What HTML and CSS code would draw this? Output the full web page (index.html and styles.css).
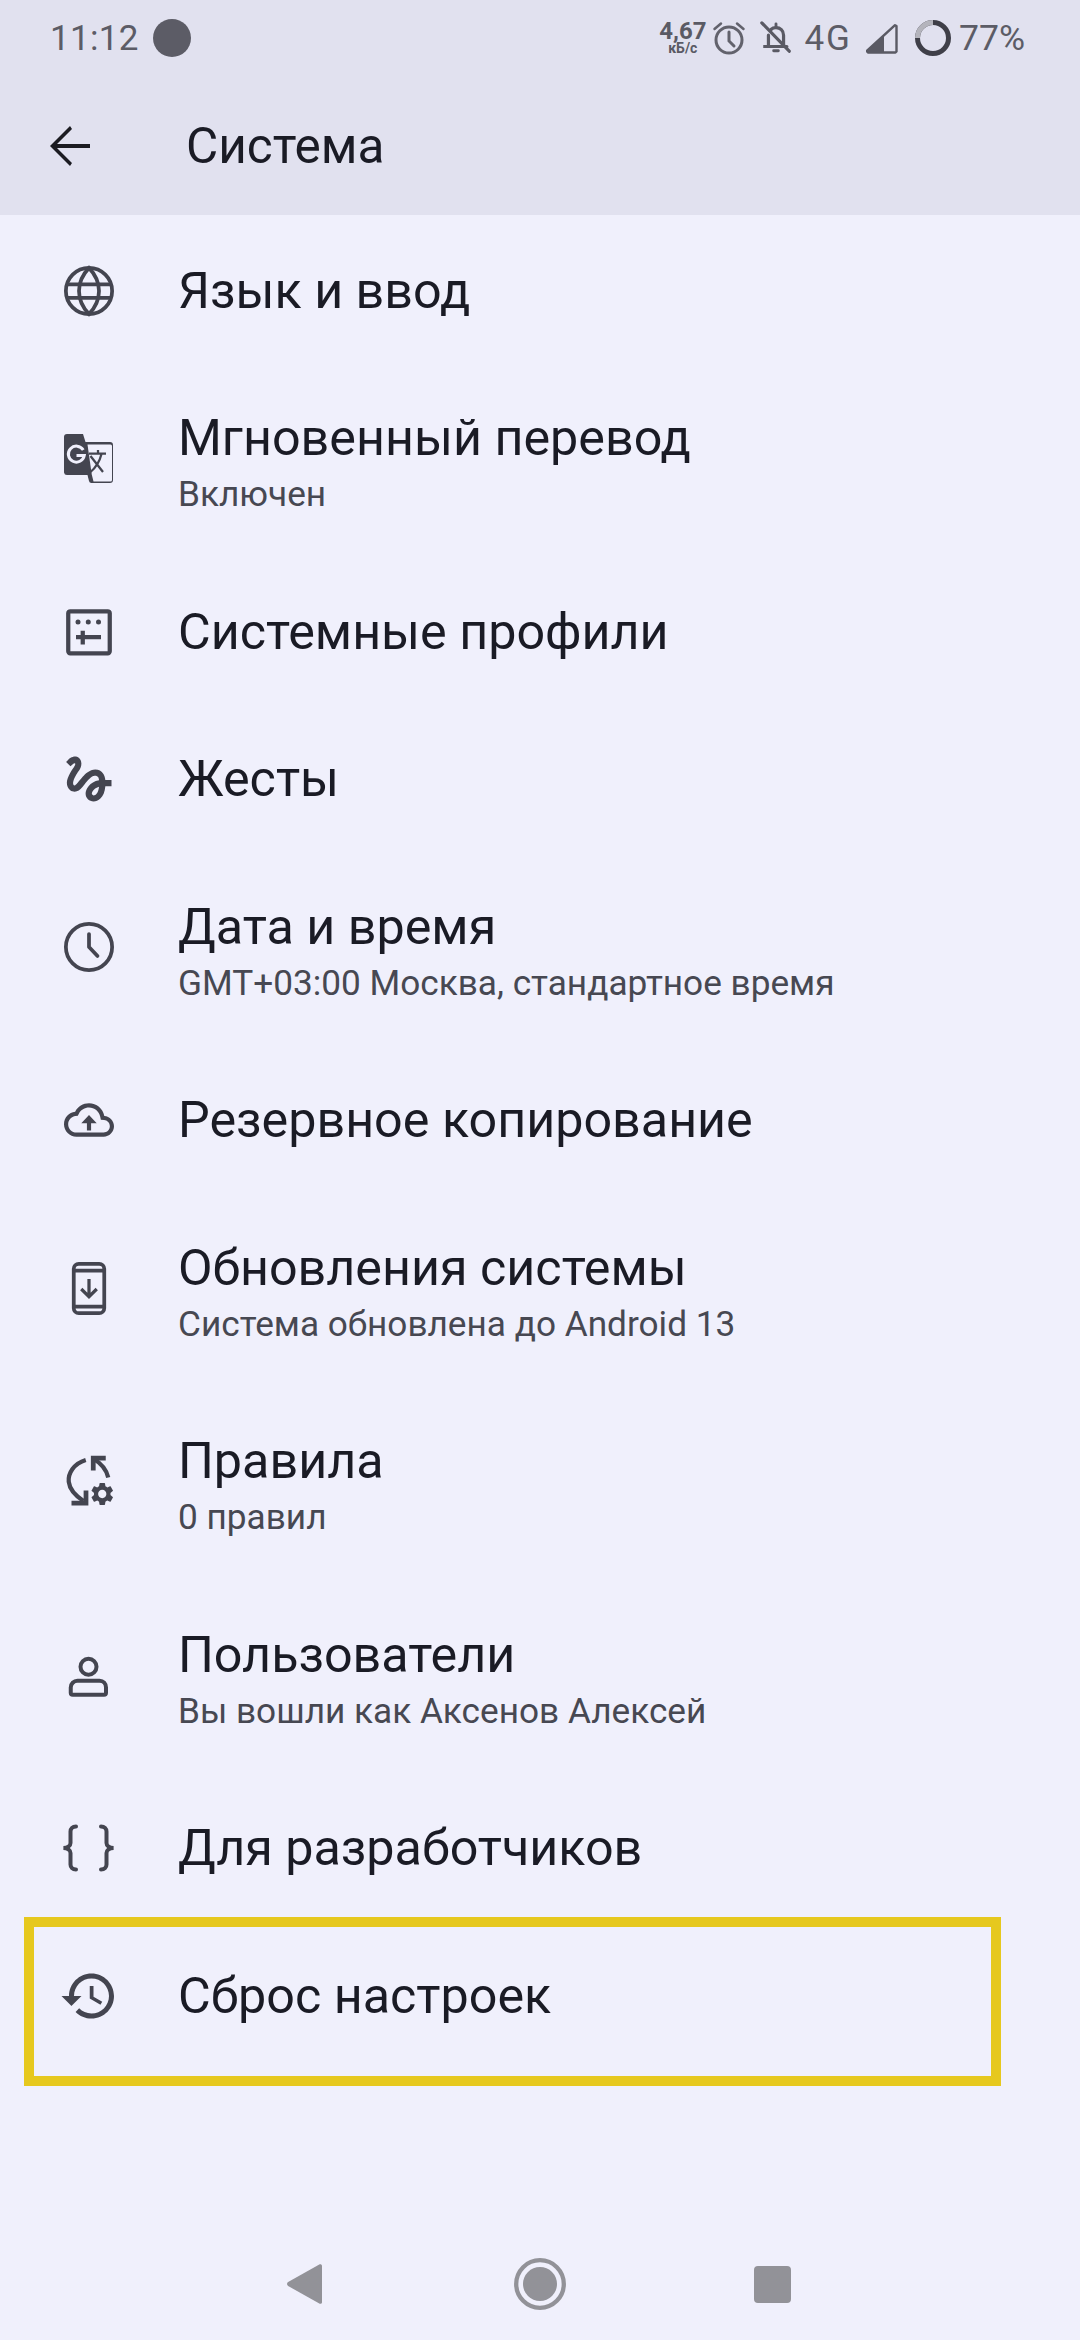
FILE: index.html
```html
<!DOCTYPE HTML>
<html lang="ru">

<head>
    <meta name="viewport" content="width=device-width, initial-scale=1">
    <title>Система</title>
    <link rel="stylesheet" href="styles.css">
</head>

<body>
    <div class="page">
        <header class="header">
            <div class="statusBar">
                <span class="clock">11:12</span>
                <span class="recordDot"></span>
                <div class="statusRight">
                    <div class="netSpeed"><span class="netValue">4,67</span><span class="netUnit">кБ/с</span></div>
                    <svg class="statusIcon alarmIcon" viewBox="0 0 36 36" fill="none" stroke="#62626c" stroke-width="3" stroke-linecap="round">
                        <circle cx="18" cy="20" r="13"/>
                        <path d="M18 12v9l5 5"/>
                        <path d="M3.5 9 10 3.5M32.5 9 26 3.5" stroke-width="2.5"/>
                    </svg>
                    <svg class="statusIcon bellIcon" viewBox="0 0 36 36" fill="none" stroke="#5a5a64" stroke-width="3.4" stroke-linecap="round">
                        <path d="M3 2 32 32"/>
                        <path d="M10 27H4.5h25M10 15v12M26 26V15c0-5-3.500-8-8-8-2 0-4 .7-5.300 2"/>
                        <path d="M18 3v3M15.500 31.500h5" stroke-width="3"/>
                    </svg>
                    <span class="networkType">4G</span>
                    <svg class="statusIcon signalIcon" viewBox="0 0 32 32">
                        <path d="M29 3.200 30.500 4v25.500l-1 1H2L0.800 29z" fill="none" stroke="#5a5a64" stroke-width="2.400" stroke-linejoin="round"/>
                        <path d="M18 13v17H2L0.800 29z" fill="#5a5a64"/>
                    </svg>
                    <svg class="statusIcon batteryIcon" viewBox="0 0 36 36" fill="none" stroke-width="5">
                        <circle cx="18" cy="18" r="15.500" stroke="#3f3f48"/>
                        <path d="M18 2.500A15.500 15.500 0 0 0 2.500 18" stroke="#b4b4bc"/>
                    </svg>
                    <span class="batteryLevel">77%</span>
                </div>
            </div>
            <div class="toolbar">
                <svg class="backIcon" viewBox="0 0 24 24" fill="#1c1c22">
                    <path d="M20 11.200H6.800l6-6L12 4l-8 8 8 8 .8-1.200-6-6H20z"/>
                </svg>
                <h1 class="pageTitle">Система</h1>
            </div>
        </header>

        <main class="settingsList">
            <div class="settingsRow">
                <svg class="rowIcon" viewBox="0 0 24 24" fill="none" stroke="#444550" stroke-width="1.500">
                    <circle cx="12" cy="12" r="9.250"/>
                    <path d="M12 2.750C9.400 5.500 8 8.500 8 12s1.400 6.500 4 9.250C14.600 18.500 16 15.500 16 12s-1.400-6.500-4-9.250z"/>
                    <path d="M3.400 9.300h17.200M3.400 14.700h17.200"/>
                </svg>
                <div class="rowText"><div class="rowTitle">Язык и ввод</div></div>
            </div>

            <div class="settingsRow twoLine">
                <svg class="rowIcon" viewBox="0 0 24 24" fill="none">
                    <path d="M3.200 2.400h6.400l1 3.200h9.800a1.200 1.200 0 0 1 1.200 1.200v14a1.200 1.200 0 0 1-1.200 1.200h-7.400a1 1 0 0 1-1-.8l-.6-2.400H3.200A1.200 1.200 0 0 1 2 17.800V3.600a1.200 1.200 0 0 1 1.200-1.200z" fill="#444550"/>
                    <path d="M11.400 6.600h9.200a.6.6 0 0 1 .6.6v13.600a.6.6 0 0 1-.6.6h-6.800l-.7-2.800z" fill="#f0f0fc"/>
                    <path d="M9.700 8.800A3.200 3.200 0 1 0 10.100 11H7" stroke="#f0f0fc" stroke-width="1.200"/>
                    <path d="M12 10.200h6.800M15.600 8.800v1.400M17 10.400c-.8 3.200-2.300 5.400-4.400 7.200M12.600 11.200l5 6.400" stroke="#444550" stroke-width=".9"/>
                </svg>
                <div class="rowText">
                    <div class="rowTitle">Мгновенный перевод</div>
                    <div class="rowSubtitle">Включен</div>
                </div>
            </div>

            <div class="settingsRow">
                <svg class="rowIcon" viewBox="0 0 24 24" fill="none" stroke="#444550" stroke-width="1.700">
                    <rect x="3.700" y="3.700" width="16.600" height="16.800" rx=".8"/>
                    <path d="M6.800 14h10M9.500 11.500v5.500" stroke-width="1.700"/>
                    <g fill="#444550" stroke="none">
                        <circle cx="7.600" cy="8" r="1"/>
                        <circle cx="11.700" cy="8" r="1"/>
                        <circle cx="15.800" cy="8" r="1"/>
                    </g>
                </svg>
                <div class="rowText"><div class="rowTitle">Системные профили</div></div>
            </div>

            <div class="settingsRow">
                <svg class="rowIcon" viewBox="0 0 24 24" fill="#444550">
                    <path d="M4.590 6.890c.7-.71 1.400-1.350 1.710-1.220.5.2 0 1.030-.3 1.520-.25.42-2.860 3.890-2.860 6.310 0 1.280.48 2.340 1.340 2.980.75.56 1.740.73 2.640.46 1.070-.31 1.950-1.400 3.060-2.770 1.210-1.490 2.830-3.440 4.080-3.440 1.630 0 1.650 1.010 1.760 1.790-3.780.64-5.380 3.670-5.380 5.370 0 1.700 1.440 3.090 3.210 3.090 1.630 0 4.290-1.330 4.690-6.100H21v-2.500h-2.470c-.15-1.650-1.090-4.200-4.030-4.200-2.250 0-4.180 1.910-4.940 2.840-.58.730-2.060 2.480-2.290 2.720-.25.3-.68.840-1.110.84-.45 0-.72-.83-.36-1.920.35-1.090 1.400-2.860 1.850-3.520.78-1.140 1.300-1.920 1.300-3.280C8.950 3.690 7.310 3 6.440 3 5.120 3 3.970 4 3.720 4.250c-.36.360-.66.660-.88.930l1.750 1.710zm9.290 11.660c-.31 0-.74-.26-.74-.72 0-.6.73-2.200 2.870-2.760-.3 2.690-1.430 3.480-2.130 3.480z"/>
                </svg>
                <div class="rowText"><div class="rowTitle">Жесты</div></div>
            </div>

            <div class="settingsRow twoLine">
                <svg class="rowIcon" viewBox="0 0 24 24" fill="none" stroke="#444550" stroke-width="1.500" stroke-linecap="round" stroke-linejoin="round">
                    <circle cx="12" cy="12" r="9.250"/>
                    <path d="M12 6.800V12l3.400 3.600"/>
                </svg>
                <div class="rowText">
                    <div class="rowTitle">Дата и время</div>
                    <div class="rowSubtitle">GMT+03:00 Москва, стандартное время</div>
                </div>
            </div>

            <div class="settingsRow">
                <svg class="rowIcon" viewBox="-2.400 -2.400 28.800 28.800" fill="#444550">
                    <path d="M19.350 10.040C18.670 6.590 15.640 4 12 4 9.110 4 6.600 5.640 5.350 8.040 2.340 8.360 0 10.910 0 14c0 3.310 2.690 6 6 6h13c2.760 0 5-2.240 5-5 0-2.640-2.050-4.780-4.650-4.960zM19 18H6c-2.210 0-4-1.790-4-4 0-2.050 1.530-3.760 3.560-3.970l1.070-.11.5-.95C8.080 7.140 9.940 6 12 6c2.620 0 4.880 1.860 5.390 4.430l.3 1.500 1.530.11c1.560.1 2.780 1.410 2.780 2.960 0 1.650-1.350 3-3 3z"/>
                    <path d="M8.300 13.600 12 9.600l3.700 4h-2.700v3.400h-2v-3.400z"/>
                </svg>
                <div class="rowText"><div class="rowTitle">Резервное копирование</div></div>
            </div>

            <div class="settingsRow twoLine">
                <svg class="rowIcon" viewBox="0 0 24 24" fill="none" stroke="#444550" stroke-width="1.500">
                    <rect x="5.900" y="2.300" width="12.200" height="19.800" rx="2"/>
                    <path d="M5.900 5h12.200M5.900 19.400h12.200"/>
                    <path d="M12 8.400v7M8.900 12.400 12 15.500l3.100-3.100" stroke-width="1.300"/>
                </svg>
                <div class="rowText">
                    <div class="rowTitle">Обновления системы</div>
                    <div class="rowSubtitle">Система обновлена до Android 13</div>
                </div>
            </div>

            <div class="settingsRow twoLine">
                <svg class="rowIcon" viewBox="0 0 24 24" fill="none" stroke="#444550" stroke-width="1.700">
                    <path d="M10.700 3.600C5.900 5 3.600 9 3.900 12.300 4.200 15 6 17.500 9.800 20"/>
                    <path d="M5 20.800h5.800V15.800" stroke-width="1.900"/>
                    <path d="M13.600 3C17 5 19 7.500 19.700 10.600"/>
                    <path d="M18.700 2.800h-5v5" stroke-width="1.900"/>
                    <path transform="translate(17.300 17.200) scale(.46) translate(-12 -12)" stroke="none" fill="#444550" d="M19.140 12.940c.04-.3.06-.61.06-.94 0-.32-.02-.64-.07-.94l2.030-1.580c.18-.14.23-.41.12-.61l-1.920-3.320c-.12-.22-.37-.29-.59-.22l-2.390.96c-.5-.38-1.030-.7-1.620-.94l-.36-2.540c-.04-.24-.24-.41-.48-.41h-3.840c-.24 0-.43.17-.47.41l-.36 2.540c-.59.24-1.130.57-1.620.94l-2.390-.96c-.22-.08-.47 0-.59.22L2.740 8.870c-.12.21-.08.47.12.61l2.030 1.580c-.05.3-.09.63-.09.94s.02.64.07.94l-2.030 1.580c-.18.14-.23.41-.12.61l1.920 3.320c.12.22.37.29.59.22l2.390-.96c.5.38 1.030.7 1.620.94l.36 2.540c.05.24.24.41.48.41h3.840c.24 0 .44-.17.47-.41l.36-2.540c.59-.24 1.130-.56 1.620-.94l2.390.96c.22.08.47 0 .59-.22l1.920-3.320c.12-.22.07-.47-.12-.61l-2.010-1.580zM12 15.600c-1.980 0-3.600-1.620-3.600-3.600s1.620-3.600 3.600-3.600 3.600 1.620 3.600 3.600-1.620 3.600-3.600 3.600z"/>
                </svg>
                <div class="rowText">
                    <div class="rowTitle">Правила</div>
                    <div class="rowSubtitle">0 правил</div>
                </div>
            </div>

            <div class="settingsRow twoLine">
                <svg class="rowIcon" viewBox="0 0 24 24" fill="none" stroke="#444550" stroke-width="1.600">
                    <circle cx="11.800" cy="8.700" r="3.200"/>
                    <path d="M7.400 14.300h8.800c1.500 0 2.600 1.200 2.600 2.700v2.100a.8.8 0 0 1-.8.8H5.500a.8.8 0 0 1-.8-.8V17c0-1.500 1.200-2.700 2.700-2.700z"/>
                </svg>
                <div class="rowText">
                    <div class="rowTitle">Пользователи</div>
                    <div class="rowSubtitle">Вы вошли как Аксенов Алексей</div>
                </div>
            </div>

            <div class="settingsRow">
                <svg class="rowIcon" viewBox="0 0 24 24" fill="none" stroke="#444550" stroke-width="1.600" stroke-linecap="round">
                    <path d="M6.800 3.400C5.400 3.400 4.600 4.200 4.600 5.400V10C4.600 11 3.600 11.900 1.800 12 3.600 12.100 4.600 13 4.600 14V18.600C4.600 19.800 5.400 20.600 6.800 20.600"/>
                    <path d="M16.800 3.400C18.200 3.400 19 4.200 19 5.400V10C19 11 20 11.900 21.800 12 20 12.100 19 13 19 14V18.600C19 19.800 18.200 20.600 16.800 20.600"/>
                </svg>
                <div class="rowText"><div class="rowTitle">Для разработчиков</div></div>
            </div>

            <div class="settingsRow">
                <svg class="rowIcon" viewBox="0 0 24 24" fill="#444550">
                    <path d="M13 3c-4.970 0-9 4.030-9 9H1l3.890 3.890.07.14L9 12H6c0-3.870 3.130-7 7-7s7 3.130 7 7-3.130 7-7 7c-1.930 0-3.680-.79-4.940-2.060l-1.420 1.420C8.270 19.990 10.510 21 13 21c4.970 0 9-4.030 9-9s-4.030-9-9-9zm-.7 5v5l4.280 2.540.72-1.210-3.500-2.080V8h-1.500z"/>
                </svg>
                <div class="rowText"><div class="rowTitle">Сброс настроек</div></div>
            </div>
        </main>

        <div class="highlightBox"></div>

        <nav class="navBar">
            <svg class="navBack" viewBox="0 0 32 40" preserveAspectRatio="none" fill="#929298">
                <path d="M29.500 .4 1 18c-1.300.9-1.300 3 0 4l28.500 17.600c1.100.6 2.500 0 2.500-1.400V1.800C32 .4 30.600-.2 29.500 .4z"/>
            </svg>
            <svg class="navHome" viewBox="0 0 52 52" fill="none">
                <circle cx="26" cy="26" r="23.800" stroke="#929298" stroke-width="4.300"/>
                <circle cx="26" cy="26" r="17" fill="#929298"/>
            </svg>
            <div class="navRecent"></div>
        </nav>
    </div>
</body>

</html>
```

FILE: styles.css
```css
html {
    font-family: Roboto, "Noto Sans", sans-serif;
}

body {
    margin: 0;
    background: #f0f0fc;
}

.page {
    position: relative;
    display: flex;
    flex-direction: column;
    width: 1080px;
    height: 2340px;
    overflow: hidden;
}

.header {
    height: 215px;
    background: #e1e1ef;
}

.statusBar {
    display: flex;
    align-items: center;
    height: 76px;
    padding: 0 55px 0 50px;
    color: #5c5c66;
}

.clock {
    font-size: 35px;
    letter-spacing: .3px;
}

.recordDot {
    width: 38px;
    height: 38px;
    margin-left: 14px;
    border-radius: 50%;
    background: #5c5c66;
}

.statusRight {
    display: flex;
    align-items: center;
    margin-left: auto;
}

.netSpeed {
    display: flex;
    flex-direction: column;
    align-items: center;
    color: #5a5a64;
    font-weight: 700;
}

.netValue {
    font-size: 24px;
    line-height: 20px;
}

.netUnit {
    font-size: 14px;
    line-height: 14px;
}

.statusIcon {
    flex: none;
}

.alarmIcon {
    width: 36px;
    height: 36px;
    margin-left: 5px;
}

.bellIcon {
    width: 34px;
    height: 34px;
    margin-left: 12px;
}

.networkType {
    margin-left: 11px;
    font-size: 35px;
    letter-spacing: 2px;
}

.signalIcon {
    width: 32px;
    height: 32px;
    margin-left: 14px;
}

.batteryIcon {
    width: 36px;
    height: 36px;
    margin-left: 17px;
}

.batteryLevel {
    margin-left: 8px;
    font-size: 35.6px;
}

.toolbar {
    display: flex;
    align-items: center;
    height: 139px;
    padding-left: 40px;
}

.backIcon {
    width: 60px;
    height: 60px;
}

.pageTitle {
    margin: 0 0 0 86px;
    color: #1a1b25;
    font-size: 49.5px;
    font-weight: 400;
}

.settingsList {
    padding-top: 2px;
}

.settingsRow {
    display: flex;
    align-items: center;
    padding: 43.75px 0 43.75px 59px;
}

.rowIcon {
    flex: none;
    width: 60px;
    height: 60px;
}

.twoLine .rowIcon {
    margin-top: -6px;
}

.rowText {
    margin-left: 59px;
}

.rowTitle {
    color: #1a1b25;
    font-size: 50.25px;
    line-height: 60px;
}

.rowSubtitle {
    margin: 3px 0 -3px;
    color: #474852;
    font-size: 35.2px;
    line-height: 46px;
}

.highlightBox {
    position: absolute;
    left: 24px;
    top: 1917px;
    box-sizing: border-box;
    width: 977px;
    height: 169px;
    border: 10px solid #e6c81e;
}

.navBar {
    position: absolute;
    left: 0;
    right: 0;
    bottom: 28px;
    display: flex;
    align-items: center;
    height: 56px;
}

.navBack {
    width: 35px;
    height: 40px;
    margin-left: 287px;
}

.navHome {
    width: 52px;
    height: 52px;
    margin-left: 192px;
}

.navRecent {
    width: 37px;
    height: 37px;
    margin-left: 188px;
    border-radius: 4px;
    background: #929298;
}
```
